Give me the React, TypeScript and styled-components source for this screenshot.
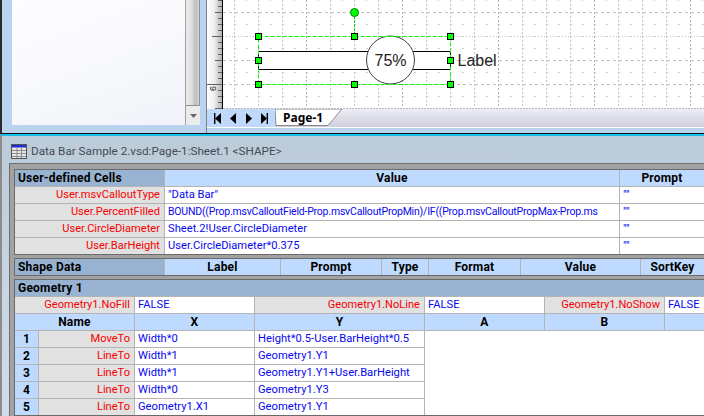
import * as React from 'react'
import styled, { createGlobalStyle } from 'styled-components'

const GlobalStyle = createGlobalStyle`
  html, body {
    margin: 0;
    padding: 0;
    background: #d0dfe9;
  }
`

const Page = styled.div`
  width: 704px;
  height: 416px;
  overflow: hidden;
  display: flex;
  flex-direction: column;
  font-family: 'Roboto', 'Liberation Sans', sans-serif;
  font-size: 12px;
`

/* Top window: stencil panel and drawing */
const TopWindow = styled.div`
  height: 134px;
  flex: none;
  display: flex;
  box-sizing: border-box;
  border-left: 2px solid #2a2a2a;
  border-bottom: 1px solid #101010;
  background: #b9d3f1;
`

const StencilPanel = styled.div`
  width: 173px;
  height: 125px;
  margin-left: 10px;
  flex: none;
  background: linear-gradient(160deg, #fdfdff 0%, #f8f9fc 50%, #f2f3f9 100%);
`

const ScrollTrack = styled.div`
  width: 15px;
  height: 125px;
  flex: none;
  display: flex;
  flex-direction: column;
  box-sizing: border-box;
  border-left: 1px solid #a0a0a0;
  background: #f0f0f0;
`

const ScrollThumb = styled.div`
  height: 106px;
  flex: none;
  box-sizing: border-box;
  border-right: 1px solid #909090;
  border-bottom: 1px solid #909090;
  background: linear-gradient(90deg, #ececec 0%, #e0e0e0 40%, #bdbdbd 75%, #d8d8d8 100%);
`

const ScrollButton = styled.div`
  flex: 1;
  display: flex;
  align-items: center;
  justify-content: center;
  background: #ececec;
`

const DrawingPane = styled.div`
  flex: 1;
  min-width: 0;
  margin-left: 6px;
  display: flex;
  flex-direction: column;
  border-left: 1px solid #808080;
`

const CanvasRow = styled.div`
  height: 109px;
  flex: none;
  display: flex;
  background: #fff;
`

const TabBar = styled.div`
  height: 18px;
  flex: none;
  display: flex;
  border-bottom: 1px solid #fff;
  background: linear-gradient(180deg, #ecedf4 0%, #d0cfdf 100%);
`

const NavButtons = styled.div`
  width: 68px;
  flex: none;
  display: flex;
  align-items: center;
  justify-content: space-around;
  padding: 0 3px;
  box-sizing: border-box;
  background: #bed9fc;
`

const PageTab = styled.div`
  position: relative;
  width: 68px;
  flex: none;
  padding: 0 0 0 8px;
  box-sizing: border-box;
  font-family: 'Noto Sans', sans-serif;
  font-weight: 700;
  font-size: 12px;
  line-height: 17px;
  color: #000;

  svg {
    position: absolute;
    inset: 0;
  }

  span {
    position: relative;
  }
`

/* Shape sheet window */
const SheetWindow = styled.div`
  flex: 1;
  min-height: 0;
  display: flex;
  flex-direction: column;
  border-top: 2px solid #18c0ec;
  border-left: 2px solid #8c8c8c;
  background: linear-gradient(180deg, #bccbd8 0%, #cfdeea 100%);
`

const TitleBar = styled.div`
  height: 27px;
  flex: none;
  display: flex;
  align-items: center;
  gap: 4px;
  padding: 3px 0 0 9px;
  box-sizing: border-box;
  color: #434b57;
  font-size: 11.7px;
`

const SheetFrame = styled.div`
  flex: 1;
  min-height: 0;
  margin-left: 7px;
  padding: 5px 0 0 4px;
  display: flex;
  flex-direction: column;
  gap: 3px;
  border-top: 1px solid #6e6e6e;
  border-left: 1px solid #6e6e6e;
  background: #a2a2a2;
`

const Section = styled.div<{ $columns: string }>`
  display: grid;
  grid-template-columns: ${p => p.$columns};
  grid-auto-rows: 16px;
  gap: 1px;
  padding-bottom: 0;
  border: 1px solid #6a6a6a;
  border-right: none;
  background: #b4b4b4;
`

const Cell = styled.div`
  white-space: nowrap;
  overflow: hidden;
  line-height: 16px;
`

const SectionTitle = styled(Cell)<{ $span?: string }>`
  grid-column: ${p => p.$span || 'auto'};
  padding-left: 3px;
  background: #98b3d1;
  font-weight: 700;
  color: #000;
  letter-spacing: 0.2px;
`

const ColumnHead = styled(Cell)<{ $span?: string }>`
  grid-column: ${p => p.$span || 'auto'};
  background: #bfdaff;
  font-weight: 700;
  color: #000;
  text-align: center;
  letter-spacing: 0.2px;
`

const NameCell = styled(Cell)<{ $span?: string }>`
  grid-column: ${p => p.$span || 'auto'};
  padding-right: 4px;
  background: #e1e1e1;
  color: #f80000;
  font-size: 11.1px;
  text-align: right;
`

const ValueCell = styled(Cell)<{ $dense?: boolean }>`
  padding-left: 3px;
  background: #fff;
  color: #0808f0;
  font-size: ${p => (p.$dense ? '10.5px' : '11.2px')};
  letter-spacing: ${p => (p.$dense ? '-0.2px' : 'normal')};
`

const BlankArea = styled.div`
  grid-column: 5 / -1;
  grid-row: span 5;
  background: #fff;
`

const RulerTicks = () => {
  const ticks = []
  for (let y = 0; y < 109; y += 6) {
    const len = y === 36 ? 10 : y % 24 === 12 ? 7 : 4
    ticks.push(<line key={y} x1={15 - len} x2={15} y1={y + 0.5} y2={y + 0.5} stroke="#606060" />)
  }
  return (
    <svg width="16" height="109" style={{ flex: 'none', display: 'block' }}>
      <defs>
        <linearGradient id="rulerFill" x1="0" x2="1" y1="0" y2="0">
          <stop offset="0" stopColor="#ffffff" />
          <stop offset="0.5" stopColor="#ececec" />
          <stop offset="1" stopColor="#b4b4b4" />
        </linearGradient>
      </defs>
      <rect width="15" height="109" fill="url(#rulerFill)" />
      {ticks}
      <rect x="0" y="84" width="15" height="1" fill="#606060" />
      <text x="0" y="0" fontSize="9" fill="#222" fontFamily="Liberation Sans" transform="translate(3 86) rotate(90)">9</text>
      <rect x="15" width="1" height="109" fill="#000" />
    </svg>
  )
}

const handles: [number, number][] = [
  [35, 36], [131, 36], [227, 36],
  [35, 60], [227, 60],
  [35, 84], [131, 84], [227, 84],
]

const Canvas = () => {
  const vx = []
  const hy = []
  for (let x = 11; x < 481; x += 24) {
    const strong = (x - 83) % 96 === 0
    vx.push(
      <line key={x} x1={x + 0.5} x2={x + 0.5} y1="0" y2="108" stroke={strong ? '#b0b0b0' : '#c4c4c4'} strokeDasharray="2 2" />
    )
    vx.push(
      <line key={`m${x}`} x1={x + 12.5} x2={x + 12.5} y1="0" y2="108" stroke="#cfcfcf" strokeDasharray="1 11" />
    )
  }
  for (let y = 12; y < 108; y += 24) {
    hy.push(
      <line key={y} x1="0" x2="481" y1={y + 0.5} y2={y + 0.5} stroke="#c0c0c0" strokeDasharray={y === 36 ? '1 2' : '3 3'} />
    )
    hy.push(
      <line key={`m${y}`} x1="0" x2="481" y1={y + 12.5} y2={y + 12.5} stroke="#cfcfcf" strokeDasharray="1 11" />
    )
  }
  return (
    <svg width="481" height="109" style={{ flex: 'none', display: 'block' }}>
      {vx}
      {hy}
      <line x1="0" x2="481" y1="108.5" y2="108.5" stroke="#b4b4b4" strokeDasharray="2 1" />
      <rect x="35.5" y="51.5" width="192" height="18" fill="#fff" stroke="#000" />
      <circle cx="167.5" cy="60" r="24" fill="#fff" stroke="#404040" />
      <text x="167.5" y="65.5" textAnchor="middle" fontSize="16" fill="#222" fontFamily="Liberation Sans">75%</text>
      <text x="234.5" y="65.5" fontSize="16" fill="#222" fontFamily="Liberation Sans">Label</text>
      <rect x="35.5" y="36.5" width="192" height="48" fill="none" stroke="#00ff00" strokeDasharray="4 2" />
      <line x1="131.5" x2="131.5" y1="16" y2="36" stroke="#00e000" strokeDasharray="3 1" />
      <circle cx="131.5" cy="12.5" r="4" fill="#00ff00" stroke="#008000" />
      {handles.map(([x, y]) => (
        <rect key={`${x}-${y}`} x={x - 2.5} y={y - 2.5} width="6" height="6" fill="#00ff00" stroke="#000" />
      ))}
    </svg>
  )
}

const NavIcon = ({ dir, bar }: { dir: 'l' | 'r'; bar?: boolean }) => (
  <svg width="8" height="11" viewBox="0 0 8 11">
    {dir === 'l' ? <polygon points="7,0 7,11 1,5.5" fill="#000" /> : <polygon points="1,0 1,11 7,5.5" fill="#000" />}
    {bar && (dir === 'l' ? <rect x="0" width="1.4" height="11" /> : <rect x="6.6" width="1.4" height="11" />)}
  </svg>
)

const SheetIcon = () => (
  <svg width="16" height="15" viewBox="0 0 16 15" style={{ flex: 'none' }}>
    <rect x="0.5" y="0.5" width="15" height="14" fill="#e8e8e8" stroke="#555" />
    <rect x="1" y="1" width="14" height="2.5" fill="#1c2fd0" />
    <path d="M1 6.5h14M1 9.5h14M1 12.5h14M6 4v10M10.5 4v10" stroke="#8c8c8c" fill="none" />
  </svg>
)

const userRows = [
  ['User.msvCalloutType', '"Data Bar"'],
  ['User.PercentFilled', 'BOUND((Prop.msvCalloutField-Prop.msvCalloutPropMin)/IF((Prop.msvCalloutPropMax-Prop.ms'],
  ['User.CircleDiameter', 'Sheet.2!User.CircleDiameter'],
  ['User.BarHeight', 'User.CircleDiameter*0.375'],
]

const geometryRows = [
  ['1', 'MoveTo', 'Width*0', 'Height*0.5-User.BarHeight*0.5'],
  ['2', 'LineTo', 'Width*1', 'Geometry1.Y1'],
  ['3', 'LineTo', 'Width*1', 'Geometry1.Y1+User.BarHeight'],
  ['4', 'LineTo', 'Width*0', 'Geometry1.Y3'],
  ['5', 'LineTo', 'Geometry1.X1', 'Geometry1.Y1'],
]

const App = () => (
  <Page>
    <GlobalStyle />
    <TopWindow>
      <StencilPanel />
      <ScrollTrack>
        <ScrollThumb />
        <ScrollButton>
          <svg width="7" height="4" viewBox="0 0 7 4">
            <polygon points="0,0 7,0 3.5,4" fill="#666" />
          </svg>
        </ScrollButton>
      </ScrollTrack>
      <DrawingPane>
        <CanvasRow>
          <RulerTicks />
          <Canvas />
        </CanvasRow>
        <TabBar>
          <NavButtons>
            <NavIcon dir="l" bar />
            <NavIcon dir="l" />
            <NavIcon dir="r" />
            <NavIcon dir="r" bar />
          </NavButtons>
          <PageTab>
            <svg width="68" height="17">
              <polygon points="0,0 67,0 53,16.5 1,16.5" fill="#fff" stroke="#8a8a8a" />
            </svg>
            <span>Page-1</span>
          </PageTab>
        </TabBar>
      </DrawingPane>
    </TopWindow>
    <SheetWindow>
      <TitleBar>
        <SheetIcon />
        Data Bar Sample 2.vsd:Page-1:Sheet.1 &lt;SHAPE&gt;
      </TitleBar>
      <SheetFrame>
        <Section $columns="149px 454px 1fr">
          <SectionTitle>User-defined Cells</SectionTitle>
          <ColumnHead>Value</ColumnHead>
          <ColumnHead>Prompt</ColumnHead>
          {userRows.map(([name, value]) => (
            <React.Fragment key={name}>
              <NameCell>{name}</NameCell>
              <ValueCell $dense={value.length > 60}>{value}</ValueCell>
              <ValueCell>""</ValueCell>
            </React.Fragment>
          ))}
        </Section>
        <Section $columns="149px 115px 100px 46px 91px 119px 1fr">
          <SectionTitle>Shape Data</SectionTitle>
          <ColumnHead>Label</ColumnHead>
          <ColumnHead>Prompt</ColumnHead>
          <ColumnHead>Type</ColumnHead>
          <ColumnHead>Format</ColumnHead>
          <ColumnHead>Value</ColumnHead>
          <ColumnHead>SortKey</ColumnHead>
        </Section>
        <Section $columns="23px 95px 119px 169px 119px 119px 1fr">
          <SectionTitle $span="1 / -1">Geometry 1</SectionTitle>
          <NameCell $span="span 2">Geometry1.NoFill</NameCell>
          <ValueCell>FALSE</ValueCell>
          <NameCell>Geometry1.NoLine</NameCell>
          <ValueCell>FALSE</ValueCell>
          <NameCell>Geometry1.NoShow</NameCell>
          <ValueCell>FALSE</ValueCell>
          <ColumnHead $span="span 2">Name</ColumnHead>
          <ColumnHead>X</ColumnHead>
          <ColumnHead>Y</ColumnHead>
          <ColumnHead>A</ColumnHead>
          <ColumnHead>B</ColumnHead>
          <ColumnHead />
          {geometryRows.map(([index, name, x, y], i) => (
            <React.Fragment key={index}>
              <ColumnHead>{index}</ColumnHead>
              <NameCell>{name}</NameCell>
              <ValueCell>{x}</ValueCell>
              <ValueCell>{y}</ValueCell>
              {i === 0 && <BlankArea />}
            </React.Fragment>
          ))}
        </Section>
      </SheetFrame>
    </SheetWindow>
  </Page>
)

export default App
